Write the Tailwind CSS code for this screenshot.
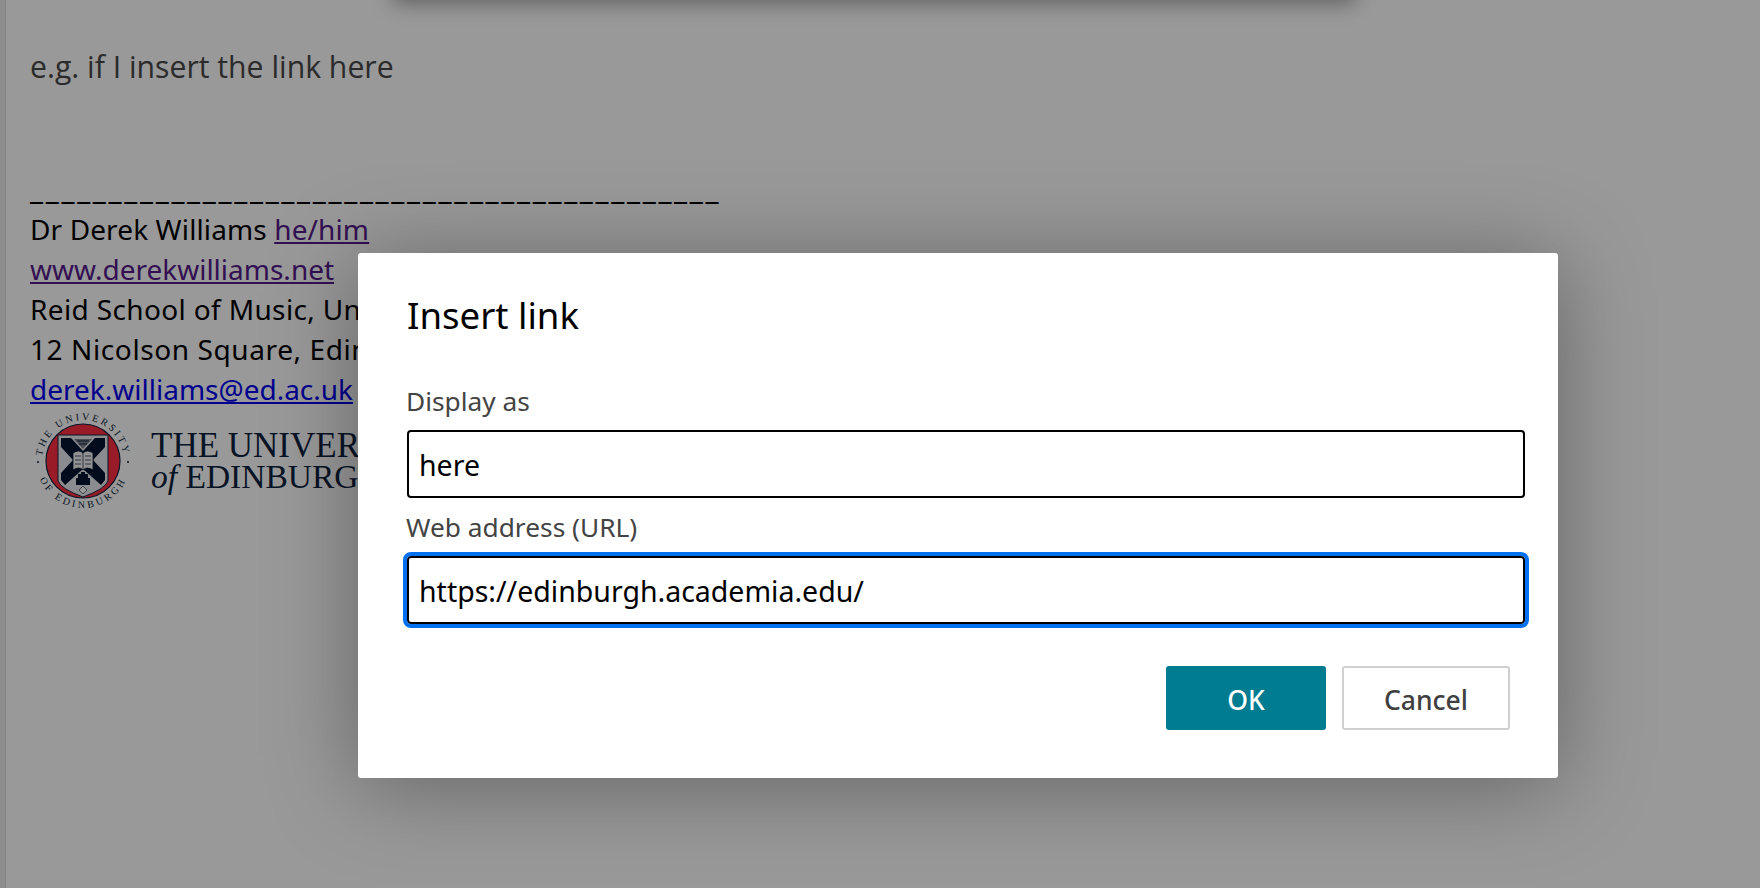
<!DOCTYPE html>
<html lang="en">
<head>
<meta charset="utf-8">
<title>Insert link</title>
<script src="https://cdn.jsdelivr.net/npm/@tailwindcss/browser@4"></script>
</head>
<body class="m-0">
<div class="relative w-[1760px] h-[888px] overflow-hidden bg-white flex font-['Open_Sans',sans-serif]">
  <div class="w-[6px] shrink-0 bg-[#ececec] border-r border-[#dddddd]"></div>
  <div class="relative flex-1 pl-[24px]">
    <div class="absolute left-[387px] top-[-40px] w-[962px] h-[40px] bg-white shadow-[0_2px_22px_rgba(0,0,0,0.42)]"></div>
    <p class="pt-[47px] text-[30.2px] leading-[40px] text-[#484848]">e.g. if I insert the link here</p>
    <div class="mt-[88px] text-[28px] leading-[40px] text-black font-['Noto_Sans',sans-serif]">
      <div class="h-[34px] w-[700px] leading-[26px] text-[30px] font-medium tracking-[2.69px] whitespace-nowrap">____________________________________________</div>
      <div class="tracking-[0.12px]">Dr Derek Williams <a class="underline text-[#551a8b]">he/him</a></div>
      <div><a class="underline text-[#551a8b]">www.derekwilliams.net</a></div>
      <div class="whitespace-nowrap tracking-[0.36px]">Reid School of Music, University of Edinburgh</div>
      <div class="whitespace-nowrap tracking-[0.6px]">12 Nicolson Square, Edinburgh EH8 9DF</div>
      <div><a class="underline text-[#0000ee]">derek.williams@ed.ac.uk</a></div>
    </div>
    <div class="flex items-center mt-[2px] ml-[3px]">
      <svg width="100" height="100" viewBox="0 0 100 100" class="shrink-0">
        <defs>
          <path id="ringTop" d="M9.44 56 A41 41 0 1 1 90.56 56"/>
          <path id="ringBottom" d="M3.7 58 A47 47 0 0 0 96.3 58"/>
        </defs>
        <text font-family="Liberation Serif, serif" font-size="10" fill="#0b1e38" letter-spacing="2.6" text-anchor="middle"><textPath href="#ringTop" startOffset="50%">THE UNIVERSITY</textPath></text>
        <text font-family="Liberation Serif, serif" font-size="10" fill="#0b1e38" letter-spacing="3" text-anchor="middle"><textPath href="#ringBottom" startOffset="50%">OF EDINBURGH</textPath></text>
        <circle cx="5" cy="51" r="1" fill="#0b1e38"/>
        <circle cx="95" cy="51" r="1" fill="#0b1e38"/>
        <circle cx="50" cy="50" r="37" fill="#ff2e42" stroke="#10233f" stroke-width="1.2"/>
        <path d="M25 24 H75 V70 Q72 78 50 86 Q28 78 25 70 Z" fill="#e8eaee" stroke="#10233f" stroke-width="1"/>
        <path d="M28 27 H72 V69 Q69 76 50 82 Q31 76 28 69 Z" fill="#e8eaee"/>
        <path d="M28 27 H38 L50 40 L62 27 H72 V36 L60 49 L72 62 V69 L68 74 L50 58 L32 74 L28 69 V62 L40 49 L28 36 Z" fill="#05152f"/>
        <path d="M41 28 H59 L50 38 Z" fill="#7c8490"/>
        <path d="M44 30 H56 M46 33 H54" stroke="#10233f" stroke-width="1.2" fill="none"/>
        <path d="M40 42 Q46 38 50 42 Q54 38 60 42 V59 Q54 55 50 59 Q46 55 40 59 Z" fill="#f4f4f4" stroke="#05152f" stroke-width="0.8"/>
        <path d="M50 42 V59 M42 45 H48 M42 49 H48 M42 53 H48 M52 45 H58 M52 49 H58 M52 53 H58" stroke="#05152f" stroke-width="0.7" fill="none"/>
        <path d="M43 74 V67 H45 V63 H48 V61 H52 V63 H55 V67 H57 V74 Z" fill="#05152f"/>
        <path d="M50 75 L54 79 L50 83 L46 79 Z" fill="#ffffff" stroke="#05152f" stroke-width="0.6"/>
      </svg>
      <div class="ml-[18px] text-[#0d2240] font-['Liberation_Serif',serif] text-[35px] leading-[31px] whitespace-nowrap">
        <div>THE UNIVERSITY</div>
        <div class="text-[33.5px]"><i>of</i> EDINBURGH</div>
      </div>
    </div>
  </div>

  <div class="absolute inset-0 bg-black/40"></div>

  <div class="absolute left-[358px] top-[253px] w-[1200px] h-[525px] bg-white rounded-[3px] shadow-[0_8px_90px_rgba(0,0,0,0.35)] px-[49px] pt-[34px] font-['Noto_Sans',sans-serif]">
    <h2 class="text-[36.6px] leading-[56px] text-black">Insert link</h2>
    <div class="mt-[40px] -ml-[1px] text-[26.3px] leading-[36px] text-[#444444]">Display as</div>
    <div class="mt-[11px] h-[68px] w-[1118px] border-2 border-black rounded-[4px] flex items-center px-[10px] pt-[3px] text-[28.5px] text-black">here</div>
    <div class="mt-[11px] -ml-[1px] text-[26.3px] leading-[36px] text-[#444444]">Web address (URL)</div>
    <div class="mt-[11px] h-[68px] w-[1118px] border-2 border-black rounded-[4px] flex items-center px-[10px] pt-[3px] text-[28.5px] text-black outline-4 outline-[#0070f0]">https://edinburgh.academia.edu/</div>
    <div class="mt-[42px] mr-[-1px] flex justify-end gap-[16px]">
      <button class="w-[160px] h-[64px] pt-[5px] rounded-[3px] bg-[#007c91] text-white text-[26.5px] font-medium">OK</button>
      <button class="w-[168px] h-[64px] pt-[5px] rounded-[3px] bg-white border-2 border-[#d0d0d0] text-[#404040] text-[26.5px] font-medium">Cancel</button>
    </div>
  </div>
</div>
</body>
</html>
